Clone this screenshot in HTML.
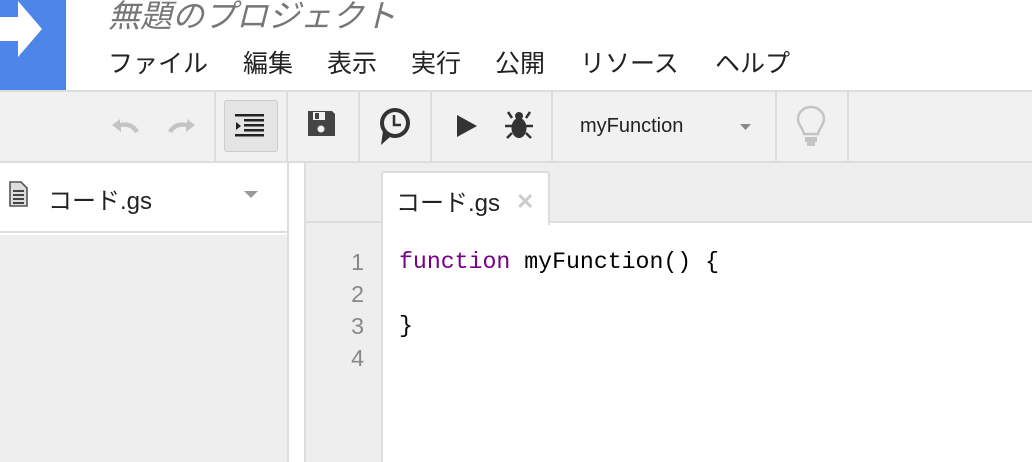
<!DOCTYPE html>
<html><head><meta charset="utf-8"><style>
*{margin:0;padding:0;box-sizing:border-box}
body{width:1032px;height:462px;overflow:hidden;background:#fff;font-family:"Liberation Sans","Noto Sans CJK JP",sans-serif;position:relative}
.abs{position:absolute}
.logo{left:0;top:0;width:66px;height:90px;background:#4d86e8}
.title{left:108px;top:-9px;font-size:32px;color:#777;font-style:italic;white-space:nowrap}
.menu{top:44px;font-size:25px;color:#222;white-space:nowrap}
.tb{left:0;top:90px;width:1032px;height:73px;background:#f1f1f1;border-top:2px solid #ddd;border-bottom:2px solid #ddd}
.sep{top:92px;width:2px;height:70px;background:#ddd}
.side{left:0;top:163px;width:287px;height:70px;background:#fff;border-bottom:2px solid #ddd}
.sideg{left:0;top:235px;width:287px;height:227px;background:#eee}
.vl{top:163px;width:2px;height:299px;background:#ddd}
.tabbar{left:306px;top:163px;width:726px;height:60px;background:#eee;border-bottom:2px solid #ddd}
.gut{left:306px;top:223px;width:75px;height:239px;background:#eee}
.code{left:381px;top:223px;width:651px;height:239px;background:#fff;border-left:2px solid #ddd}
.tab{left:381px;top:171px;width:169px;height:54px;background:#fff;border:2px solid #ddd;border-bottom:none;border-radius:3px 3px 0 0}
.mono{font-family:"Liberation Mono",monospace;font-size:23.2px;line-height:32px}
</style></head><body>
<div class="abs logo"><svg width="66" height="90"><path d="M0 17h18v-16l24 28-24 28v-16H0z" fill="#fff"/></svg></div>
<div class="abs title">無題のプロジェクト</div>
<div class="abs menu" style="left:108px">ファイル</div>
<div class="abs menu" style="left:243px">編集</div>
<div class="abs menu" style="left:327px">表示</div>
<div class="abs menu" style="left:411px">実行</div>
<div class="abs menu" style="left:495px">公開</div>
<div class="abs menu" style="left:580px">リソース</div>
<div class="abs menu" style="left:715px">ヘルプ</div>

<div class="abs tb"></div>
<div class="abs sep" style="left:214px"></div>
<div class="abs sep" style="left:286px"></div>
<div class="abs sep" style="left:358px"></div>
<div class="abs sep" style="left:430px"></div>
<div class="abs sep" style="left:551px"></div>
<div class="abs sep" style="left:775px"></div>
<div class="abs sep" style="left:847px"></div>
<svg class="abs" style="left:108px;top:112px" width="90" height="30">
<path d="M4 13 L12 7 L12 11 C20 9 27 12 31 19 L27 21 C24 16 19 14 13 15 L13 20Z" fill="#c4c4c4"/>
<path d="M87 13 L79 7 L79 11 C71 9 64 12 60 19 L64 21 C67 16 72 14 78 15 L78 20Z" fill="#c4c4c4"/>
</svg>
<div class="abs" style="left:224px;top:100px;width:54px;height:52px;background:#e4e4e4;border:1px solid #ccc;border-radius:3px"></div>
<svg class="abs" style="left:230px;top:108px" width="40" height="36">
<path d="M6 14l5 4-5 4z" fill="#222"/><rect x="5" y="6" width="29" height="2.5" fill="#222"/><rect x="14" y="11" width="20" height="2.5" fill="#222"/><rect x="14" y="16" width="20" height="2.5" fill="#222"/><rect x="14" y="21" width="20" height="2.5" fill="#222"/><rect x="5" y="26" width="29" height="2.5" fill="#222"/>
</svg>
<svg class="abs" style="left:305px;top:109px" width="34" height="30">
<path d="M3 2h24l3 3v22H3z" fill="#444"/><rect x="8" y="3" width="12" height="8" fill="#f1f1f1"/><rect x="10" y="4" width="4" height="6" fill="#444"/><circle cx="16" cy="20" r="3.5" fill="#f1f1f1"/>
</svg>
<svg class="abs" style="left:375px;top:105px" width="40" height="42">
<circle cx="20" cy="18" r="15" fill="#333"/><circle cx="20" cy="18" r="11" fill="#f1f1f1"/><path d="M19 10v10h7" stroke="#333" stroke-width="2.5" fill="none"/><path d="M8 26l-2 14 10-9z" fill="#333"/>
</svg>
<svg class="abs" style="left:455px;top:113px" width="24" height="26"><path d="M2 2l20 11-20 11z" fill="#333"/></svg>
<svg class="abs" style="left:503px;top:108px" width="32" height="34">
<ellipse cx="16" cy="20" rx="7.5" ry="10" fill="#333"/><circle cx="16" cy="8" r="4" fill="#333"/>
<path d="M5 4l4 6M27 4l-4 6M2 18h7M23 18h7M4 30l5-5M28 30l-5-5" stroke="#333" stroke-width="2.5" fill="none"/>
</svg>
<div class="abs" style="left:580px;top:115px;font-size:20px;color:#222">myFunction</div>
<svg class="abs" style="left:739px;top:122px" width="14" height="10"><path d="M1 2h11l-5.5 6z" fill="#888"/></svg>
<svg class="abs" style="left:794px;top:104px" width="34" height="46">
<path d="M17 3C9 3 4 9 4 15c0 6 5 9 6 15h14c1-6 6-9 6-15 0-6-5-12-13-12z" fill="none" stroke="#c4c4c4" stroke-width="2.5"/><rect x="11" y="33" width="12" height="5" fill="#c4c4c4"/><rect x="13" y="38" width="8" height="4" fill="#c4c4c4"/>
</svg>

<div class="abs side"></div>
<div class="abs sideg"></div>
<svg class="abs" style="left:8px;top:180px" width="22" height="28"><path d="M2 2h11l6 6v18H2z" fill="#ddd" stroke="#555" stroke-width="1.6"/><path d="M5 11h11M5 15h11M5 19h11M5 23h11" stroke="#444" stroke-width="2"/></svg>
<div class="abs" style="left:48px;top:181px;font-size:24px;color:#222">コード.gs</div>
<svg class="abs" style="left:243px;top:190px" width="16" height="10"><path d="M1 1h14l-7 7z" fill="#999"/></svg>
<div class="abs vl" style="left:287px"></div>
<div class="abs vl" style="left:304px"></div>
<div class="abs tabbar"></div>
<div class="abs gut"></div>
<div class="abs code"></div>
<div class="abs tab"></div>
<div class="abs" style="left:396px;top:183px;font-size:24px;color:#222">コード.gs</div>
<div class="abs" style="left:516px;top:189px;font-size:22px;color:#ccc;font-weight:bold">✕</div>
<div class="abs mono" style="left:320px;top:246px;width:44px;text-align:right;color:#888;font-family:'Liberation Sans',sans-serif">1<br>2<br>3<br>4</div>
<div class="abs mono" style="left:399px;top:246px;color:#000;white-space:pre"><span style="color:#708">function</span> myFunction() {

}</div>
</body></html>
